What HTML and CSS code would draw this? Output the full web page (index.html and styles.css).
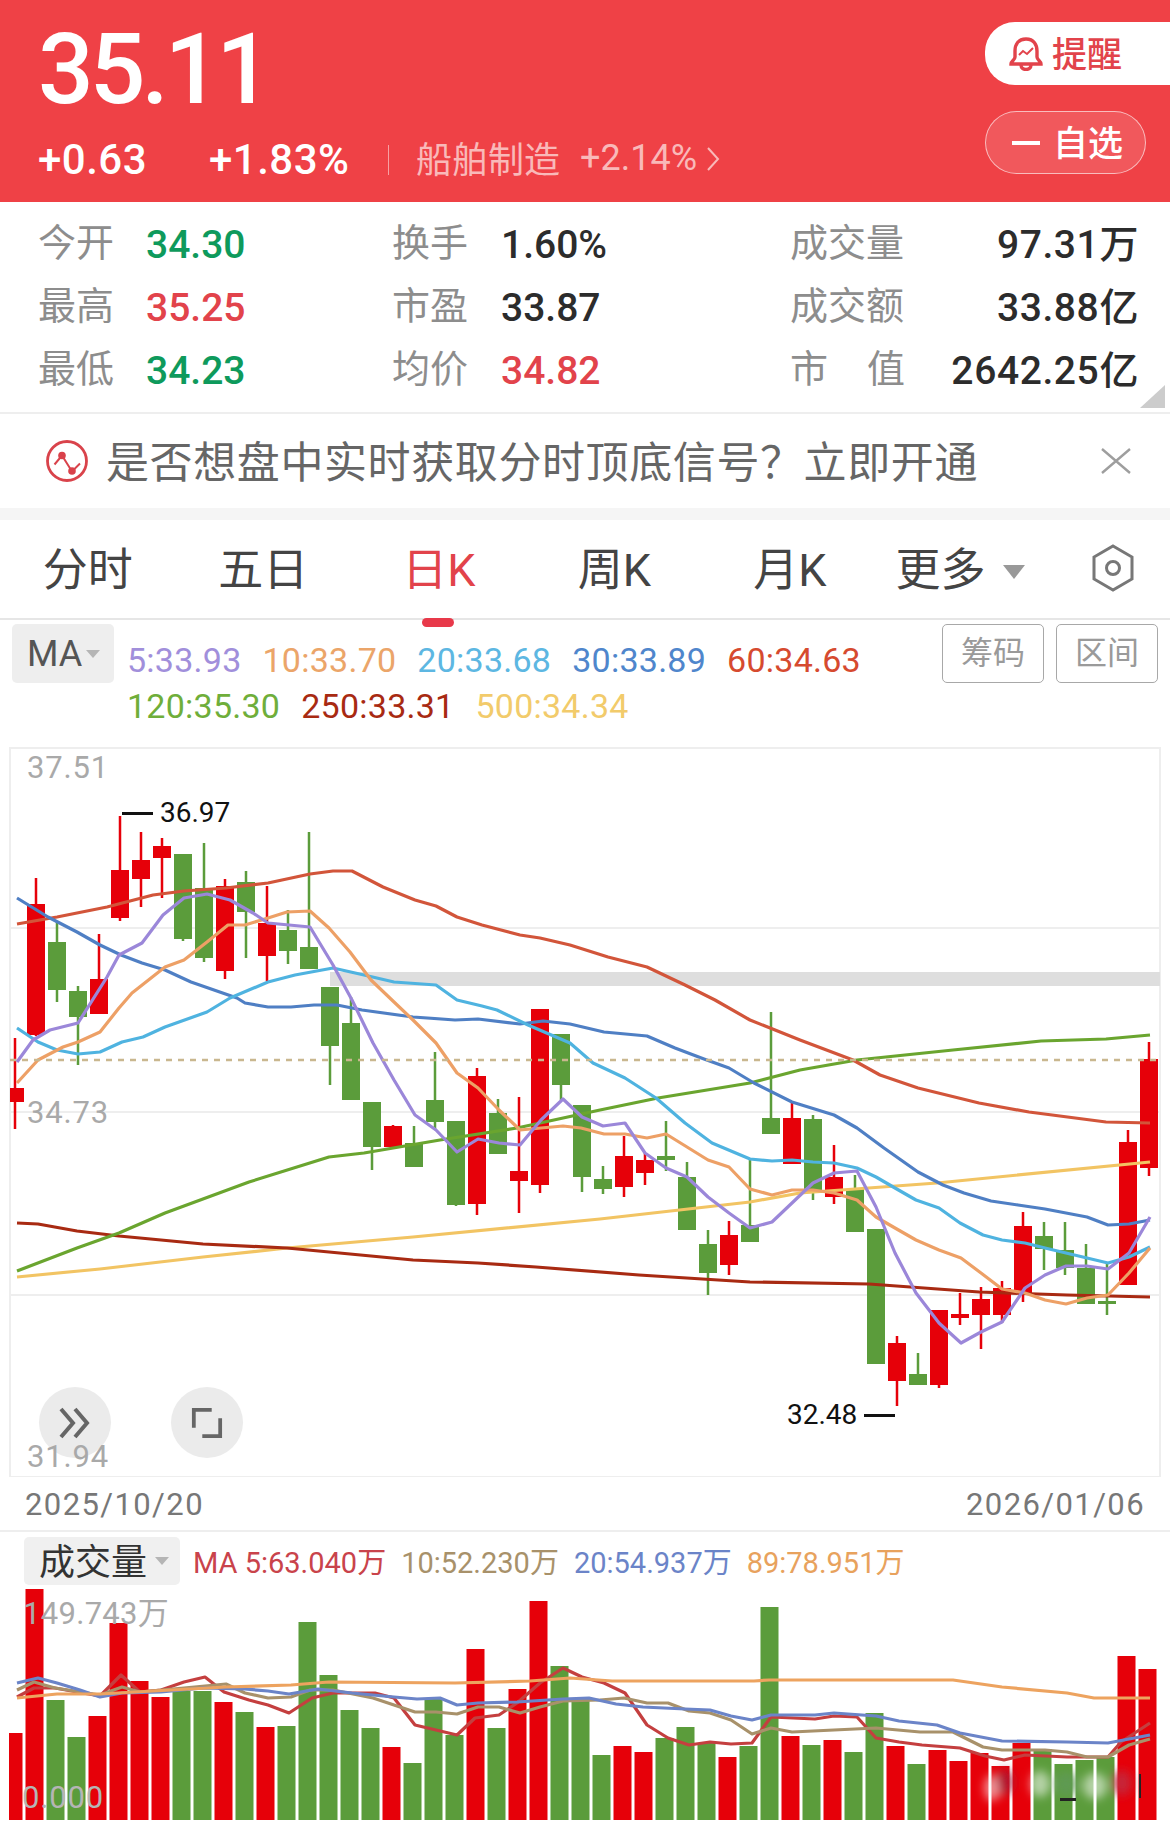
FILE: index.html
```html
<!DOCTYPE html>
<html lang="zh-CN">

<head>
  <meta charset="UTF-8">
  <title>35.11 日K</title>
  <link rel="stylesheet" href="styles.css">
</head>

<body>
  <!-- 顶部行情 -->
  <div class="quote-head">
    <div class="quote-left">
      <div class="price">35.11</div>
      <div class="change-row">
        <span class="change">+0.63</span>
        <span class="change-pct">+1.83%</span>
        <span class="sep"></span>
        <span class="sector">船舶制造</span>
        <span class="sector-pct">+2.14%</span>
        <svg class="chevron" viewBox="0 0 14 26"><path d="M2 2 L12 13 L2 24" /></svg>
      </div>
    </div>
    <div class="quote-right">
      <div class="pill-alert">
        <svg class="bell" viewBox="0 0 34 34">
          <path d="M17 2 C9 2 6 8 6 14 V20 C6 23 2 24 2 27 H32 C32 24 28 23 28 20 V14 C28 8 25 2 17 2 Z" />
          <path d="M12 28 C12 34 22 34 22 28" />
          <path class="bell-wave" d="M10 18 L14 14 L18 17 L24 11" />
        </svg>
        <span class="pill-text">提醒</span>
      </div>
      <div class="pill-fav">
        <span class="minus"></span>
        <span class="pill-text">自选</span>
      </div>
    </div>
  </div>

  <!-- 盘口数据 -->
  <div class="stats">
    <div class="stat-col stat-col-1">
      <div class="stat"><span class="stat-label">今开</span><span class="stat-value down">34.30</span></div>
      <div class="stat"><span class="stat-label">最高</span><span class="stat-value up">35.25</span></div>
      <div class="stat"><span class="stat-label">最低</span><span class="stat-value down">34.23</span></div>
    </div>
    <div class="stat-col stat-col-2">
      <div class="stat"><span class="stat-label">换手</span><span class="stat-value">1.60%</span></div>
      <div class="stat"><span class="stat-label">市盈</span><span class="stat-value">33.87</span></div>
      <div class="stat"><span class="stat-label">均价</span><span class="stat-value up">34.82</span></div>
    </div>
    <div class="stat-col stat-col-3">
      <div class="stat"><span class="stat-label">成交量</span><span class="stat-value">97.31万</span></div>
      <div class="stat"><span class="stat-label">成交额</span><span class="stat-value">33.88亿</span></div>
      <div class="stat"><span class="stat-label stat-label-wide"><span>市</span><span>值</span></span><span class="stat-value">2642.25亿</span></div>
    </div>
    <span class="corner"></span>
  </div>

  <!-- 提示条 -->
  <div class="notice">
    <svg class="notice-icon" viewBox="0 0 44 44">
      <circle class="ring" cx="22" cy="22" r="19.5" />
      <path class="link" d="M9.5 25.5 L17 16.5 L27 32.5 L35 24.5" />
      <circle class="dot" cx="17" cy="16.5" r="3.8" />
      <circle class="dot" cx="27" cy="32" r="3.8" />
    </svg>
    <span class="notice-text">是否想盘中实时获取分时顶底信号？立即开通</span>
    <svg class="notice-close" viewBox="0 0 32 28"><path d="M2 2 L30 26 M30 2 L2 26" /></svg>
  </div>

  <!-- 周期切换 -->
  <div class="tabs">
    <div class="tab">分时</div>
    <div class="tab">五日</div>
    <div class="tab active">日K</div>
    <div class="tab">周K</div>
    <div class="tab">月K</div>
    <div class="tab-more">更多<span class="caret caret-big"></span></div>
    <svg class="hex" viewBox="0 0 44 48">
      <path d="M22 2 L41 13 V35 L22 46 L3 35 V13 Z" />
      <circle cx="22" cy="24" r="6.5" />
    </svg>
  </div>

  <!-- 均线图例 -->
  <div class="ma-row">
    <div class="ma-btn">MA<span class="caret"></span></div>
    <div class="ma-legend">
      <span class="c-ma5">5:33.93</span>
      <span class="c-ma10">10:33.70</span>
      <span class="c-ma20">20:33.68</span>
      <span class="c-ma30">30:33.89</span>
      <span class="c-ma60">60:34.63</span>
      <span class="c-ma120">120:35.30</span>
      <span class="c-ma250">250:33.31</span>
      <span class="c-ma500">500:34.34</span>
    </div>
    <div class="ma-tools">
      <div class="tool-btn">筹码</div>
      <div class="tool-btn">区间</div>
    </div>
  </div>

  <!-- K线图 -->
  <div class="kline">
    <svg id="klineSvg" class="chart-svg" viewBox="0 747 1170 730"></svg>
    <div class="mark mark-high"><span class="mark-line"></span><span>36.97</span></div>
    <div class="mark mark-low"><span>32.48</span><span class="mark-line"></span></div>
    <div class="round-btn round-forward">
      <svg viewBox="0 0 32 32"><path d="M2 2 L14 16 L2 30 M16 2 L28 16 L16 30" /></svg>
    </div>
    <div class="round-btn round-expand">
      <svg viewBox="0 0 34 34"><path d="M22 3 H3 V22 M12 31 H31 V12" /></svg>
    </div>
    <span class="axis-label label-top">37.51</span>
    <span class="axis-label label-mid">34.73</span>
    <span class="axis-label label-bottom">31.94</span>
  </div>

  <div class="date-row">
    <span>2025/10/20</span>
    <span>2026/01/06</span>
  </div>

  <!-- 成交量 -->
  <div class="vol-head">
    <div class="vol-btn"><span class="vol-btn-text">成交量</span><span class="caret"></span></div>
    <span class="vol-ma c-vol5">MA 5:63.040万</span>
    <span class="vol-ma c-vol10">10:52.230万</span>
    <span class="vol-ma c-vol20">20:54.937万</span>
    <span class="vol-ma c-vol89">89:78.951万</span>
  </div>
  <div class="volume">
    <svg id="volumeSvg" class="chart-svg" viewBox="0 1585 1170 241"></svg>
    <span class="axis-label vol-top">149.743万</span>
    <span class="axis-label vol-zero">0.000</span>
  </div>

  <script src="chart.js"></script>
</body>

</html>
```

FILE: styles.css
```css
* {
  box-sizing: border-box;
}

body {
  margin: 0;
  width: 1170px;
  background-color: white;
  color: #333;
  font-family: Roboto, "Noto Sans CJK SC", sans-serif;
}

.quote-head {
  display: flex;
  justify-content: space-between;
  height: 202px;
  background-color: #ef4146;
  color: white;
}

.quote-left {
  padding: 14px 0 0 38px;
}

.price {
  font-size: 98px;
  font-weight: 500;
  line-height: 112px;
  letter-spacing: -4px;
}

.change-row {
  display: flex;
  align-items: center;
  height: 46px;
  margin-top: 10px;
  font-size: 42px;
  font-weight: 500;
  letter-spacing: 0.5px;
}

.change {
  width: 171px;
}

.change-pct {
  width: 179px;
}

.sep {
  width: 1px;
  height: 30px;
  margin-top: 2px;
  background-color: rgba(255, 255, 255, 0.5);
  margin-right: 27px;
}

.sector {
  margin-top: -5px;
  margin-right: 20px;
  font-size: 36px;
  font-weight: 400;
  letter-spacing: 0;
  color: #f9b9b9;
}

.sector-pct {
  margin-top: -3px;
  margin-right: 9px;
  font-size: 36px;
  font-weight: 400;
  letter-spacing: 0;
  color: #f9b9b9;
}

.chevron {
  width: 14px;
  height: 26px;
  fill: none;
  stroke: #f9b9b9;
  stroke-width: 2;
}

.quote-right {
  display: flex;
  flex-direction: column;
  align-items: flex-end;
  padding-top: 22px;
}

.pill-alert,
.pill-fav {
  display: flex;
  align-items: center;
  font-size: 35px;
  font-weight: 500;
}

.pill-text {
  margin-top: -5px;
}

.pill-alert {
  width: 185px;
  height: 63px;
  padding-left: 24px;
  gap: 9px;
  background-color: white;
  border-radius: 30px 0 0 30px;
  color: #e2434b;
}

.bell {
  width: 34px;
  height: 34px;
  fill: none;
  stroke: #e2434b;
  stroke-width: 3.4;
}

.bell-wave {
  stroke-width: 2;
}

.pill-fav {
  width: 161px;
  height: 63px;
  margin-top: 26px;
  margin-right: 24px;
  padding-left: 26px;
  gap: 13px;
  border: 1.5px solid rgba(255, 255, 255, 0.6);
  border-radius: 32px;
  background-color: rgba(255, 255, 255, 0.12);
}

.minus {
  width: 28px;
  height: 4px;
  background-color: white;
}

.stats {
  position: relative;
  display: flex;
  height: 212px;
  padding-top: 8px;
  border-bottom: 2px solid #eeeeee;
}

.stat-col-1 {
  width: 392px;
  padding-left: 38px;
}

.stat-col-2 {
  width: 398px;
}

.stat-col-3 {
  width: 349px;
}

.stat {
  display: flex;
  align-items: baseline;
  height: 63px;
  padding-top: 4px;
}

.stat-label {
  position: relative;
  top: 1px;
  width: 108px;
  font-size: 38px;
  line-height: 56px;
  color: #8d8d8d;
}

.stat-value {
  position: relative;
  top: 3px;
  font-size: 39px;
  font-weight: 500;
  line-height: 56px;
  letter-spacing: 0;
  color: #2c2c2c;
}

.stat-col-2 .stat-label {
  width: 109px;
}

.stat-col-3 .stat-label {
  width: 115px;
}

.stat-col-3 .stat-value {
  flex: 1;
  text-align: right;
  letter-spacing: 0.6px;
}

.stat-label-wide {
  display: flex;
  justify-content: space-between;
}

.up {
  color: #e2434b;
}

.down {
  color: #0e9a5c;
}

.corner {
  position: absolute;
  right: 5px;
  bottom: 4px;
  width: 0;
  height: 0;
  border-left: 25px solid transparent;
  border-bottom: 23px solid #cccccc;
}

.notice {
  display: flex;
  align-items: center;
  height: 94px;
  padding-left: 45px;
  border-bottom: 12px solid #f5f5f5;
  box-sizing: content-box;
}

.notice-icon {
  width: 44px;
  height: 44px;
  margin-right: 17px;
}

.ring {
  fill: none;
  stroke: #d9434b;
  stroke-width: 2.8;
}

.link {
  fill: none;
  stroke: #d9434b;
  stroke-width: 2;
}

.dot {
  fill: #d9414a;
}

.notice-text {
  margin-top: -4px;
  font-size: 43px;
  color: #666666;
  letter-spacing: 0.6px;
}

.notice-close {
  width: 32px;
  height: 28px;
  margin-left: auto;
  margin-right: 38px;
  fill: none;
  stroke: #9e9e9e;
  stroke-width: 2.4;
}

.tabs {
  display: flex;
  align-items: center;
  height: 100px;
  padding-top: 4px;
  border-bottom: 2px solid #e6e6e6;
  font-size: 45px;
  color: #444444;
}

.tab {
  position: relative;
  width: 175.5px;
  text-align: center;
  line-height: 80px;
}

.tab.active {
  color: #e2434b;
}

.tab.active::after {
  content: "";
  position: absolute;
  left: 71px;
  bottom: -16px;
  width: 32px;
  height: 9px;
  border-radius: 5px;
  background-color: #e8394a;
}

.tab-more {
  display: flex;
  align-items: center;
  margin-left: 18px;
  line-height: 80px;
}

.caret {
  display: inline-block;
  width: 0;
  height: 0;
  margin-left: 4px;
  border-left: 7px solid transparent;
  border-right: 7px solid transparent;
  border-top: 8px solid #b5b5b5;
}

.caret-big {
  margin-left: 17px;
  margin-top: 2px;
  border-left-width: 11px;
  border-right-width: 11px;
  border-top: 14px solid #999999;
}

.hex {
  width: 44px;
  height: 48px;
  margin-left: 66px;
  margin-top: -6px;
  fill: none;
  stroke: #777777;
  stroke-width: 3;
}

.ma-row {
  display: flex;
  height: 127px;
  padding: 4px 12px 0;
}

.ma-btn {
  display: flex;
  align-items: center;
  width: 102px;
  height: 59px;
  padding-left: 15px;
  border-radius: 5px;
  background-color: #eeeeee;
  font-size: 36px;
  color: #555555;
}

.ma-legend {
  display: flex;
  flex-wrap: wrap;
  align-content: flex-start;
  column-gap: 21px;
  width: 780px;
  margin-left: 13px;
  padding-top: 13px;
  font-size: 34px;
  line-height: 46px;
  letter-spacing: 0.25px;
}

.c-ma5 { color: #a18fdb; }
.c-ma10 { color: #eba569; }
.c-ma20 { color: #5db7e2; }
.c-ma30 { color: #4f86cc; }
.c-ma60 { color: #d64a2f; }
.c-ma120 { color: #6fae3a; }
.c-ma250 { color: #a82a12; }
.c-ma500 { color: #f2cb6b; }

.ma-tools {
  display: flex;
  gap: 12px;
  margin-left: auto;
}

.tool-btn {
  width: 102px;
  height: 59px;
  border: 1.5px solid #a8a8a8;
  border-radius: 5px;
  font-size: 32px;
  line-height: 56px;
  text-align: center;
  color: #9a9a9a;
}

.kline {
  position: relative;
  height: 730px;
}

.chart-svg {
  display: block;
  width: 100%;
  height: 100%;
}

.axis-label {
  position: absolute;
  left: 27px;
  font-size: 31px;
  line-height: 36px;
  letter-spacing: 0.8px;
  color: #a9a9a9;
}

.label-top {
  top: 3px;
}

.label-mid {
  top: 348px;
}

.label-bottom {
  top: 692px;
}

.mark {
  position: absolute;
  display: flex;
  align-items: center;
  gap: 7px;
  font-size: 28px;
  line-height: 32px;
  color: #111111;
}

.mark-line {
  width: 31px;
  height: 3px;
  background-color: #111111;
}

.mark-high {
  left: 122px;
  top: 50px;
}

.mark-low {
  left: 787px;
  top: 652px;
}

.round-btn {
  position: absolute;
  top: 640px;
  display: flex;
  align-items: center;
  justify-content: center;
  width: 72px;
  height: 71px;
  border-radius: 50%;
  background-color: #ebebeb;
}

.round-btn svg {
  width: 32px;
  height: 32px;
  fill: none;
  stroke: #666666;
  stroke-width: 4;
}

.round-forward {
  left: 39px;
}

.round-expand {
  left: 171px;
}

.date-row {
  display: flex;
  justify-content: space-between;
  height: 55px;
  padding: 0 25px;
  border-bottom: 2px solid #eeeeee;
  font-size: 31px;
  line-height: 56px;
  letter-spacing: 1.4px;
  color: #777777;
}

.vol-head {
  display: flex;
  align-items: center;
  height: 53px;
  padding: 5px 0 0 24px;
}

.vol-btn {
  display: flex;
  align-items: center;
  width: 156px;
  height: 48px;
  margin-right: 13px;
  padding-left: 15px;
  border-radius: 5px;
  background-color: #f0f0f0;
  font-size: 36px;
  color: #333333;
}

.vol-btn-text {
  margin-top: -5px;
}

.vol-btn .caret {
  margin-left: 8px;
}

.vol-ma {
  margin-top: -3px;
  margin-right: 15px;
  font-size: 29px;
}

.c-vol5 { color: #c9434b; }
.c-vol10 { color: #a8916a; }
.c-vol20 { color: #6b84c8; }
.c-vol89 { color: #e8a25d; }

.volume {
  position: relative;
  height: 241px;
}

.vol-top {
  left: 23px;
  top: 11px;
  letter-spacing: 0.3px;
}

.vol-zero {
  left: 22px;
  top: 195px;
  color: #b5b5b5;
}
```

FILE: chart.js
```js
// K线和成交量都按页面坐标画，viewBox 已经对齐到页面
var NS = "http://www.w3.org/2000/svg";
var RED = "#e60009";
var GREEN = "#5b9c3b";

// 颜色, 上影, 实体上, 实体下, 下影
var candles = [
  ["r", 1038, 1088, 1102, 1129], ["r", 878, 904, 1035, 1036], ["g", 922, 942, 990, 1002],
  ["g", 986, 991, 1017, 1065], ["r", 934, 979, 1014, 1014], ["r", 816, 870, 918, 921],
  ["r", 832, 860, 879, 907], ["r", 838, 846, 858, 898], ["g", 854, 854, 939, 941],
  ["g", 843, 888, 958, 962], ["r", 879, 886, 971, 979], ["g", 871, 882, 912, 958],
  ["r", 886, 923, 956, 981], ["g", 910, 930, 951, 964], ["g", 832, 947, 969, 969],
  ["g", 987, 987, 1046, 1085], ["g", 997, 1023, 1100, 1100], ["g", 1102, 1102, 1147, 1170],
  ["r", 1125, 1126, 1147, 1147], ["g", 1126, 1143, 1167, 1167], ["g", 1052, 1100, 1122, 1130],
  ["g", 1121, 1121, 1205, 1206], ["r", 1068, 1076, 1204, 1215], ["g", 1099, 1113, 1154, 1154],
  ["r", 1097, 1171, 1181, 1213], ["r", 1009, 1009, 1185, 1193], ["g", 1034, 1034, 1085, 1100],
  ["g", 1105, 1105, 1177, 1192], ["g", 1166, 1179, 1189, 1194], ["r", 1136, 1156, 1187, 1197],
  ["r", 1153, 1160, 1173, 1185], ["g", 1121, 1156, 1160, 1171], ["g", 1162, 1177, 1230, 1230],
  ["g", 1230, 1244, 1273, 1295], ["r", 1221, 1235, 1265, 1275], ["g", 1160, 1225, 1242, 1242],
  ["g", 1012, 1118, 1134, 1134], ["r", 1101, 1118, 1164, 1164], ["g", 1115, 1119, 1193, 1200],
  ["r", 1145, 1177, 1197, 1204], ["g", 1175, 1189, 1232, 1232], ["g", 1229, 1229, 1364, 1364],
  ["r", 1336, 1343, 1381, 1406], ["g", 1353, 1374, 1385, 1385], ["r", 1310, 1310, 1385, 1388],
  ["r", 1293, 1314, 1318, 1325], ["r", 1287, 1299, 1315, 1349], ["r", 1281, 1288, 1315, 1323],
  ["r", 1212, 1226, 1293, 1302], ["g", 1222, 1236, 1249, 1270], ["g", 1222, 1250, 1268, 1275],
  ["g", 1244, 1268, 1304, 1304], ["g", 1263, 1301, 1304, 1315], ["r", 1130, 1142, 1285, 1285],
  ["r", 1042, 1059, 1168, 1176]
];

var priceLines = [
  ["#f2c463", "17,1277 100,1269 203,1257 287,1248 413,1237 600,1219 750,1202 800,1193 937,1183 1150,1162"],
  ["#a82a12", "17,1223 38,1224 77,1231 119,1236 203,1244 287,1248 413,1260 478,1263 536,1267 639,1275 750,1282 869,1284 979,1292 1067,1295 1150,1297"],
  ["#6aa52f", "17,1271 77,1248 119,1233 165,1213 249,1182 329,1157 364,1153 440,1140 517,1128 600,1110 658,1098 750,1083 800,1070 857,1060 953,1050 1041,1041 1106,1039 1150,1035"],
  ["#d2553a", "17,924 57,917 107,907 153,895 184,891 226,888 268,883 310,874 333,871 352,871 383,887 415,900 436,906 457,917 482,925 520,935 540,938 570,945 608,957 647,967 685,985 715,1000 750,1020 800,1040 853,1060 880,1075 918,1088 979,1103 1029,1112 1106,1122 1150,1123"],
  ["#4f7fc4", "17,898 48,917 77,932 100,945 121,955 142,963 165,970 191,982 214,990 237,998 245,1003 268,1007 291,1007 314,1005 337,1005 362,1010 413,1017 455,1020 478,1019 520,1024 543,1021 570,1024 604,1032 647,1036 675,1048 704,1059 729,1068 754,1083 792,1102 834,1115 857,1128 884,1148 918,1172 943,1185 964,1193 991,1201 1018,1205 1045,1209 1087,1217 1108,1225 1129,1224 1150,1220"],
  ["#4fb3e0", "17,1028 38,1042 57,1050 78,1054 100,1052 122,1042 143,1037 165,1027 207,1012 230,998 268,982 295,975 333,968 364,975 394,982 436,985 457,1000 482,1006 497,1010 528,1025 570,1043 593,1063 625,1078 656,1098 685,1123 712,1143 750,1159 772,1161 792,1160 813,1162 834,1163 857,1168 876,1177 895,1188 916,1200 939,1208 960,1223 983,1235 1002,1240 1025,1243 1045,1248 1066,1253 1087,1258 1108,1263 1129,1257 1150,1247"],
  ["#eda066", "17,1083 38,1060 63,1047 78,1042 100,1032 119,1008 132,993 165,967 184,960 207,942 228,925 245,925 268,918 287,912 310,911 329,928 350,952 371,980 394,1002 413,1020 436,1043 457,1073 478,1088 499,1110 520,1130 541,1128 563,1126 581,1128 604,1134 625,1134 647,1138 666,1134 687,1147 708,1160 729,1167 750,1189 772,1195 792,1190 813,1190 834,1193 857,1200 876,1217 895,1228 916,1240 939,1250 961,1258 981,1273 1002,1289 1025,1293 1045,1300 1066,1304 1087,1298 1108,1295 1129,1273 1150,1248"],
  ["#9b87d9", "17,1062 33,1040 50,1030 78,1023 107,977 119,955 142,943 163,915 184,898 207,894 230,900 253,913 268,923 310,927 333,965 352,1000 373,1043 394,1080 415,1115 436,1130 457,1152 478,1139 499,1143 520,1145 541,1120 563,1099 582,1117 603,1126 625,1123 645,1153 666,1168 687,1177 708,1197 729,1213 750,1228 772,1222 792,1203 813,1183 834,1173 857,1171 876,1207 895,1253 916,1293 939,1323 961,1343 981,1332 1002,1322 1025,1288 1045,1275 1066,1266 1087,1266 1108,1269 1129,1253 1150,1217"]
];

// 成交量柱顶
var volumes = [
  ["r", 1733], ["r", 1589], ["g", 1700], ["g", 1737], ["r", 1716], ["r", 1623], ["r", 1681],
  ["r", 1697], ["g", 1691], ["g", 1691], ["r", 1702], ["g", 1712], ["r", 1727], ["g", 1726],
  ["g", 1622], ["g", 1675], ["g", 1710], ["g", 1728], ["r", 1747], ["g", 1763], ["g", 1698],
  ["g", 1735], ["r", 1649], ["g", 1728], ["r", 1689], ["r", 1601], ["g", 1666], ["g", 1700],
  ["g", 1755], ["r", 1746], ["r", 1752], ["g", 1738], ["g", 1727], ["g", 1743], ["r", 1757],
  ["g", 1746], ["g", 1607], ["r", 1736], ["g", 1745], ["r", 1740], ["g", 1752], ["g", 1713],
  ["r", 1746], ["g", 1764], ["r", 1750], ["r", 1761], ["r", 1753], ["r", 1766], ["r", 1743],
  ["g", 1749], ["g", 1764], ["g", 1760], ["g", 1757], ["r", 1656], ["r", 1669]
];

var volumeLines = [
  ["#c43f3f", "17,1697 34,1688 55,1688 77,1692 100,1696 121,1675 140,1692 161,1690 184,1682 205,1677 224,1692 249,1700 268,1705 289,1713 312,1698 333,1693 352,1693 375,1693 394,1698 415,1725 436,1730 457,1735 475,1718 499,1715 517,1703 540,1683 563,1668 582,1677 604,1683 625,1693 647,1725 668,1738 689,1745 710,1742 731,1744 752,1743 771,1717 815,1719 834,1716 857,1717 876,1738 899,1742 922,1745 960,1748 985,1756 1004,1760 1025,1755 1067,1757 1108,1757 1121,1742 1150,1723"],
  ["#a8916a", "17,1690 34,1682 55,1688 100,1695 122,1687 140,1692 184,1688 226,1684 245,1693 268,1698 291,1697 310,1690 333,1690 373,1698 394,1705 415,1712 436,1712 457,1714 478,1707 499,1707 520,1713 540,1707 563,1701 600,1700 624,1698 647,1703 668,1703 689,1711 710,1713 731,1720 752,1734 771,1728 792,1732 834,1730 876,1728 920,1732 953,1732 983,1747 1002,1750 1045,1750 1067,1752 1087,1757 1108,1757 1129,1745 1150,1739"],
  ["#6b84c8", "17,1683 38,1678 57,1683 80,1690 100,1697 122,1693 161,1692 203,1688 245,1689 268,1691 289,1694 318,1689 352,1693 394,1697 417,1699 440,1698 457,1705 478,1703 517,1702 563,1699 589,1698 616,1704 643,1707 685,1709 710,1710 731,1716 752,1720 771,1715 815,1715 834,1713 876,1716 899,1721 937,1725 960,1733 1002,1741 1067,1742 1108,1743 1129,1739 1150,1735"],
  ["#eda35f", "17,1698 57,1694 100,1694 153,1691 226,1687 291,1685 329,1682 455,1683 530,1681 570,1678 612,1681 754,1681 769,1680 953,1680 1002,1687 1067,1693 1094,1698 1150,1698"]
];

function add(parent, tag, attrs) {
  var el = document.createElementNS(NS, tag);
  for (var key in attrs) {
    el.setAttribute(key, attrs[key]);
  }
  parent.appendChild(el);
  return el;
}

function rect(parent, x, y, w, h, fill) {
  return add(parent, "rect", { x: x, y: y, width: w, height: h, fill: fill });
}

function line(parent, points, color, width) {
  return add(parent, "polyline", {
    points: points,
    fill: "none",
    stroke: color,
    "stroke-width": width,
    "stroke-linejoin": "round"
  });
}

function drawKline() {
  var svg = document.getElementById("klineSvg");
  var grid = "#eeeeee";

  rect(svg, 9, 747, 2, 730, grid);
  rect(svg, 1159, 747, 2, 730, grid);
  [747, 927, 1111, 1294, 1476].forEach(function (y) {
    rect(svg, 9, y, 1152, 2, grid);
  });
  // 筹码峰灰带
  rect(svg, 330, 972, 830, 14, "#dedede");

  candles.forEach(function (c, i) {
    var cx = 15 + 21 * i;
    var color = c[0] == "r" ? RED : GREEN;
    var left = Math.max(cx - 9, 10);
    rect(svg, cx - 1.25, c[1], 2.5, c[4] - c[1], color);
    rect(svg, left, c[2], cx + 9 - left, c[3] - c[2], color);
  });

  priceLines.forEach(function (l) {
    line(svg, l[1], l[0], 3.2);
  });

  add(svg, "line", {
    x1: 10, y1: 1060, x2: 1160, y2: 1060,
    stroke: "#c9b78f", "stroke-width": 2.5, "stroke-dasharray": "6 6"
  });
}

function drawVolume() {
  var svg = document.getElementById("volumeSvg");
  var defs = add(svg, "defs", {});
  var blur = add(defs, "filter", { id: "soft", x: "-60%", y: "-60%", width: "220%", height: "220%" });
  add(blur, "feGaussianBlur", { stdDeviation: 5 });

  volumes.forEach(function (v, i) {
    var cx = 13.5 + 21 * i;
    var left = Math.max(cx - 9, 9);
    rect(svg, left, v[1], cx + 9 - left, 1820 - v[1], v[0] == "r" ? RED : GREEN);
  });

  volumeLines.forEach(function (l) {
    line(svg, l[1], l[0], 3.2);
  });

  // 水印被抹过的那一块
  var smear = add(svg, "g", { filter: "url(#soft)" });
  [[992, 1788, 8, "#ffffff", 0.55], [1040, 1784, 10, "#ffffff", 0.55], [1095, 1786, 12, "#ffffff", 0.55],
    [1005, 1782, 9, "#a81c38", 0.8], [1066, 1784, 11, "#5f9a55", 0.85], [1122, 1783, 10, "#c22a40", 0.85]].forEach(function (s) {
    add(smear, "ellipse", { cx: s[0], cy: s[1], rx: s[2], ry: 13, fill: s[3], opacity: s[4] });
  });
  rect(svg, 1060, 1798, 16, 3, "#222222");
  rect(svg, 1139, 1774, 2, 24, "#222222");
}

drawKline();
drawVolume();
```
